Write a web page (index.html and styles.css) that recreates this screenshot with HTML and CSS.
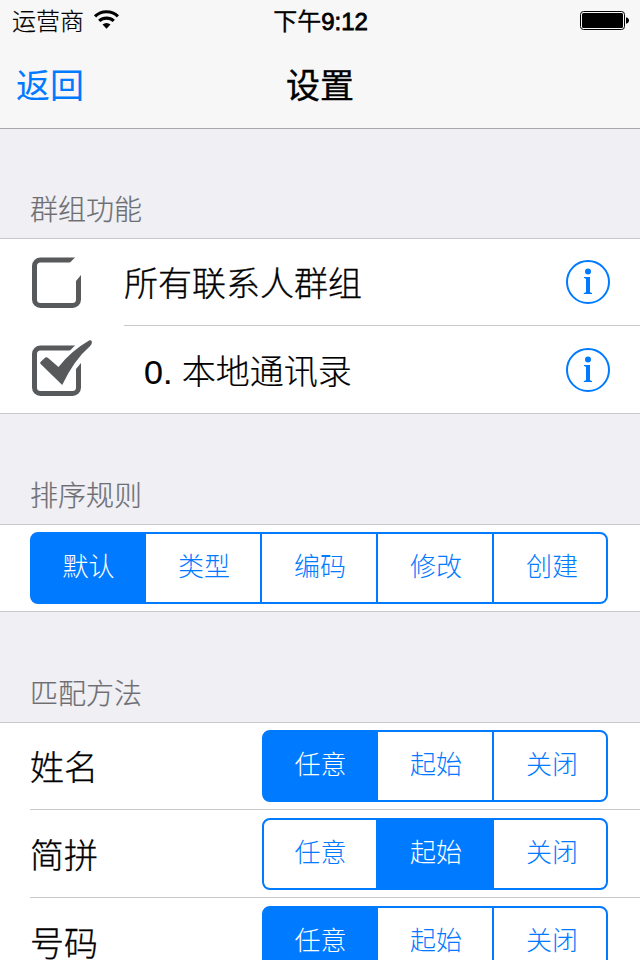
FILE: index.html
```html
<!DOCTYPE html>
<html lang="zh-CN">
<head>
<meta charset="utf-8">
<title>设置</title>
<link rel="stylesheet" href="styles.css">
</head>
<body>
<div class="screen">
  <header class="top">
    <div class="status">
      <div class="carrier">
        <span>运营商</span>
        <svg class="wifi" width="26" height="20" viewBox="0 0 26 20">
          <path d="M2 7.400a16.500 16.500 0 0 1 23 0M6.200 11.900a11 11 0 0 1 14.600 0" fill="none" stroke="#000" stroke-width="3.200"/>
          <path d="M13.500 19.800l-4-4.300a6 6 0 0 1 8 0z"/>
        </svg>
      </div>
      <div class="time">下午<b>9:12</b></div>
      <svg class="battery" width="50" height="20" viewBox="0 0 50 20">
        <rect x="1.500" y=".5" width="44" height="18" rx="3" fill="none" stroke="#000" stroke-width="1"/>
        <rect x="3" y="2" width="41" height="15" rx="1.500"/>
        <path d="M47 6.200c2 .6 3 1.800 3 3.300s-1 2.700-3 3.300z"/>
      </svg>
    </div>
    <nav class="nav">
      <a class="back">返回</a>
      <h1 class="title">设置</h1>
    </nav>
  </header>

  <h2 class="section-title first">群组功能</h2>
  <section class="card">
    <div class="row group inset">
      <svg class="check" width="64" height="60" viewBox="0 0 64 60">
        <path class="box" d="M46 8H10.500a6 6 0 0 0-6 6v33.500a6 6 0 0 0 6 6h32a6 6 0 0 0 6-6V20"/>
        <path class="cut" d="M39 11.500l7-7h3v7zM45 30.300l7-8.600V18h-7z"/>
      </svg>
      <span class="name">所有联系人群组</span>
      <svg class="info" width="44" height="44" viewBox="0 0 44 44">
        <circle class="ring" cx="22" cy="22" r="21"/>
        <circle cx="22" cy="11.500" r="3"/>
        <path d="M18 17h6v15.300l2 .7v1h-8.200v-1l2.200-.7V18.800L18 18z"/>
      </svg>
    </div>
    <div class="row group">
      <svg class="check" width="64" height="60" viewBox="0 0 64 60">
        <path class="box" d="M46 8H10.500a6 6 0 0 0-6 6v33.500a6 6 0 0 0 6 6h32a6 6 0 0 0 6-6V20"/>
        <path class="cut" d="M39 11.500l7-7h3v7zM45 30.300l7-8.600V18h-7z"/>
        <path class="tick" d="M10.500 22l4.800-4.400q1.300-.9 2.500.2L28.500 27Q41 11 59.500.3q2.500-.6 2.400 2.400-.2 1.800-2 3.600Q44 20 32.200 45L10.700 24q-.9-1-.2-2z"/>
      </svg>
      <span class="name child">0. 本地通讯录</span>
      <svg class="info" width="44" height="44" viewBox="0 0 44 44">
        <circle class="ring" cx="22" cy="22" r="21"/>
        <circle cx="22" cy="11.500" r="3"/>
        <path d="M18 17h6v15.300l2 .7v1h-8.200v-1l2.200-.7V18.800L18 18z"/>
      </svg>
    </div>
  </section>

  <h2 class="section-title">排序规则</h2>
  <section class="card">
    <div class="row">
      <div class="segments">
        <span class="seg on">默认</span><span class="seg">类型</span><span class="seg">编码</span><span class="seg">修改</span><span class="seg">创建</span>
      </div>
    </div>
  </section>

  <h2 class="section-title">匹配方法</h2>
  <section class="card">
    <div class="row match">
      <span class="name">姓名</span>
      <div class="segments"><span class="seg on">任意</span><span class="seg">起始</span><span class="seg">关闭</span></div>
    </div>
    <div class="row match">
      <span class="name">简拼</span>
      <div class="segments"><span class="seg">任意</span><span class="seg on">起始</span><span class="seg">关闭</span></div>
    </div>
    <div class="row match">
      <span class="name">号码</span>
      <div class="segments"><span class="seg on">任意</span><span class="seg">起始</span><span class="seg">关闭</span></div>
    </div>
  </section>
</div>
</body>
</html>
```
FILE: styles.css
```css
* { box-sizing: border-box; }

html, body { margin: 0; height: 960px; overflow: hidden; }

body {
  background: #efeff4;
  color: #000;
  font-family: "Liberation Sans", "Noto Sans CJK SC", sans-serif;
  font-weight: 300;
}

.screen { width: 640px; height: 960px; overflow: hidden; }

.top {
  height: 129px;
  background: #f7f7f7;
  border-bottom: 1px solid #a7a7aa;
}

.status {
  display: grid;
  grid-template-columns: 1fr auto 1fr;
  height: 40px;
  padding: 0 11px 0 12px;
  font-size: 24px;
  line-height: 43px;
}

.carrier { display: flex; gap: 9px; -webkit-text-stroke: .2px #000; }
.wifi { margin-top: 9px; }
.time { font-weight: 400; -webkit-text-stroke: .3px #000; }
.time b { font-weight: 400; -webkit-text-stroke: .8px #000; }
.battery { justify-self: end; margin-top: 11px; }

.nav {
  display: grid;
  grid-template-columns: 1fr auto 1fr;
  height: 88px;
  padding: 0 16px;
  font-size: 34px;
  line-height: 92px;
}

.back { color: #007aff; font-weight: 400; }
.title { margin: 0; font-size: 34px; font-weight: 400; -webkit-text-stroke: .4px #000; }

.section-title {
  height: 110px;
  margin: 0;
  padding: 62px 30px 0;
  color: #6d6d72;
  font-size: 28px;
  font-weight: 300;
  line-height: 41px;
  -webkit-text-stroke: .2px #6d6d72;
}

.section-title.first { height: 109px; padding-top: 61px; }

.card {
  background: linear-gradient(#c8c7cc, #c8c7cc) top / 100% 1px no-repeat,
              linear-gradient(#c8c7cc, #c8c7cc) bottom / 100% 1px no-repeat, #fff;
}

.row {
  display: flex;
  align-items: center;
  height: 88px;
  padding: 0 32px 0 30px;
}

.row.group { padding-right: 30px; }
.inset { background: linear-gradient(#c8c7cc, #c8c7cc) 124px 87px / 516px 1px no-repeat; }
.match { background: linear-gradient(#c8c7cc, #c8c7cc) 30px 87px / 610px 1px no-repeat; }

.name {
  flex: 1;
  height: 88px;
  font-size: 34px;
  line-height: 92px;
  white-space: nowrap;
  -webkit-text-stroke: .3px #000;
}
.group .name { padding-left: 30px; }
.group .name.child { padding-left: 50px; -webkit-text-stroke-width: .2px; }

.box { fill: none; stroke: #58595b; stroke-width: 5; }
.cut { fill: #fff; }
.tick { fill: #58595b; stroke: #fff; stroke-width: 4; paint-order: stroke; }

.info { fill: #007aff; }
.ring { fill: none; stroke: #007aff; stroke-width: 2; }

.segments {
  display: flex;
  height: 72px;
  border: 2px solid #007aff;
  border-radius: 8px;
  background: #007aff;
  overflow: hidden;
}

.seg {
  width: 116px;
  padding-left: 2px;
  border-right: 2px solid #007aff;
  background: #fff;
  color: #007aff;
  font-size: 26px;
  line-height: 66px;
  text-align: center;
}

.seg:first-child { width: 114px; padding-left: 1px; }
.seg:last-child { width: 112px; padding-left: 4px; border-right: 0; }
.seg.on { background: #007aff; color: #fff; }
```
